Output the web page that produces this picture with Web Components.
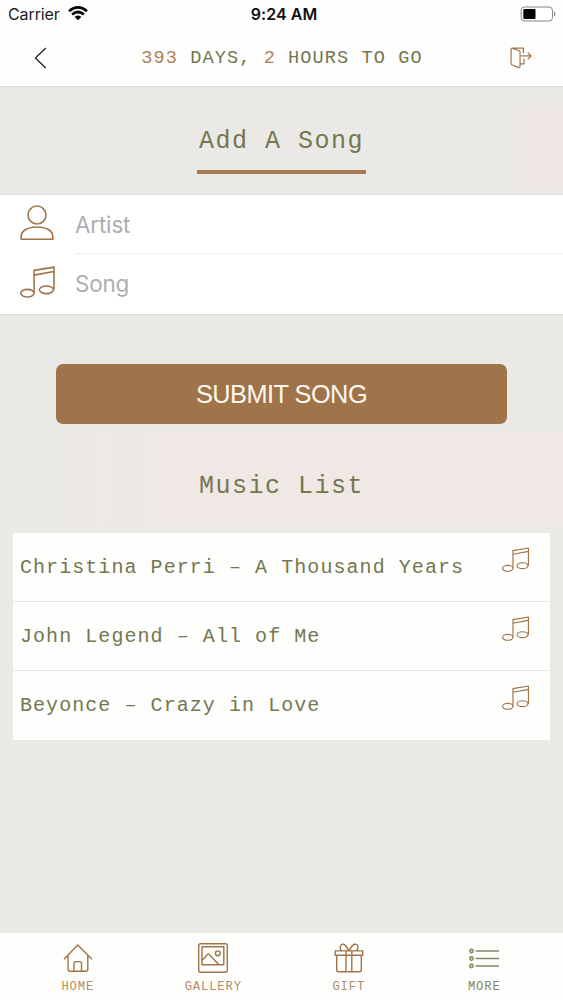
<!DOCTYPE html>
<html lang="en">
<head>
<meta charset="utf-8">
<title>Add A Song</title>
<style>
html,body{margin:0;height:100%}
body{--brown:#a0744a;--olive:#747750;--mono:"Liberation Mono",monospace;--sans:Inter,"Liberation Sans",sans-serif;overflow:hidden}
</style>
</head>
<body>
<song-app></song-app>
<script>
const define = (name, markup) => {
  const template = document.createElement('template');
  template.innerHTML = '<style>*{box-sizing:border-box}</style>' + markup;
  customElements.define(name, class extends HTMLElement {
    constructor() {
      super();
      this.attachShadow({ mode: 'open' }).append(template.content.cloneNode(true));
    }
  });
};

const icons = {
  music: ['0 0 36 33', '<ellipse cx="7.4" cy="27.2" rx="6.6" ry="3.8"/><ellipse cx="26.4" cy="23.8" rx="7" ry="3.8"/><path d="M14.1 27.2V4.4L34 1.1V23.8M14.1 9.1 34 5.5"/>'],
  user: ['0 0 34 36', '<circle cx="17" cy="10" r="9"/><path d="M1.2 34.2V31.5C1.2 25.5 8 22 17 22S32.8 25.5 32.8 31.5V34.2Z"/>'],
  back: ['0 0 14 24', '<path d="M12.7 1.2 1.5 12 12.7 22.8"/>'],
  exit: ['0 0 24 24', '<path d="M2.2 2.2Q1.1 2.2 1.1 3.3V18.2Q1.1 19 2 19.5L8.5 22.3Q10.5 23 10.5 21V6.6Q10.5 5.5 9.5 5L2.2 2.2H14V7.6M10.5 18.6H14.6V13.2M11.7 10.4H22M18.5 6.9 22 10.4 18.5 13.9"/>'],
  home: ['0 0 30 30', '<path d="M1 16.2 14.7 2 29 16.2M5.1 12.5V26Q5.1 28.2 7.2 28.2H22.5Q24.8 28.2 24.8 26V12.5M11 28V20Q11 18.6 12.5 18.6H17Q18.5 18.6 18.5 20V28"/>'],
  gallery: ['0 0 30 30', '<rect x=".7" y=".7" width="28.6" height="28.6" rx="1.7"/><path d="M4 3.8H25.8V21.7H4ZM4 17.5 9.7 11.3Q10.4 10.6 11.1 11.3L20.6 21.4"/><circle cx="19.8" cy="10.3" r="2.4"/>'],
  gift: ['0 0 30 30', '<path d="M1.2 7.9H28.8V12.2H1.2ZM2.7 12.2V27Q2.7 28.8 4.5 28.8H25.5Q27.3 28.8 27.3 27V12.2M12 8V28.5M17.8 8V28.5M14.6 7.8C11.6-.2 6.5-.4 6.3 4.2 6.2 6.2 7.2 7.8 8 7.8M15.4 7.8C18.4-.2 23.7-.4 23.9 4.2 24 6.2 22.7 7.8 21.8 7.8"/>'],
  more: ['0 0 30 30', '<g fill="currentColor" fill-opacity=".35"><circle cx="2.5" cy="8" r="1.7"/><circle cx="2.5" cy="15.5" r="1.7"/><circle cx="2.5" cy="23" r="1.7"/></g><path d="M6.6 8H30M6.6 15.5H30M6.6 23H30"/>']
};
customElements.define('line-icon', class extends HTMLElement {
  connectedCallback() {
    const [box, art] = icons[this.getAttribute('name')];
    this.attachShadow({ mode: 'open' }).innerHTML =
      `<style>:host{display:block;flex:none;color:var(--brown)}svg{display:block;width:100%;height:100%;overflow:visible;fill:none;stroke:currentColor;stroke-width:var(--line,1.6);stroke-linejoin:round}</style><svg viewBox="${box}">${art}</svg>`;
  }
});

define('status-bar', `<style>
:host{display:grid;grid-template-columns:1fr auto 1fr;align-items:center;height:29px;padding:0 7px 2px 8px;font:16px/20px var(--sans);color:#202020}
.left{display:flex;align-items:center;gap:8px;letter-spacing:-.1px}
.time{font-weight:600;font-size:16px;letter-spacing:.05px;color:#111;transform:translateX(2px)}
.battery{justify-self:end}
svg{display:block}
</style>
<div class="left"><span>Carrier</span>
<svg width="20" height="15" viewBox="0 0 20 15" fill="none" stroke="#050505" stroke-width="2.7"><path d="M1 5.2Q10-2.4 19 5.2M4.1 8.5Q10 3.5 15.9 8.5"/><path d="M6.7 10.9Q10 8.2 13.3 10.9L10 14.2Z" fill="#050505" stroke="none"/></svg></div>
<span class="time">9:24 AM</span>
<svg class="battery" width="36" height="16" viewBox="0 0 36 16"><rect x="1.2" y="1" width="31.3" height="14" rx="3.5" fill="#fff" stroke="#858585"/><rect x="3.3" y="3.1" width="12.2" height="9.8" rx="1" fill="#000"/><path d="M34 5.3Q37 8 34 10.7Z" fill="#858585"/></svg>`);

define('nav-bar', `<style>
:host{display:grid;grid-template-columns:1fr auto 1fr;align-items:center;height:58px;padding:0 30px 0 34px;border-bottom:1px solid #e0dfe0;font:18.6px/24px var(--mono);letter-spacing:1.07px;color:var(--olive)}
.back{width:13px;height:24px;color:#222;--line:1.35}
.exit{width:23px;height:23px;justify-self:end;--line:1.25}
div{white-space:pre;padding-top:2px;margin-left:-3px}
::slotted(b){font-weight:400;color:#b27f50}
</style><line-icon class="back" name="back"></line-icon><div><slot></slot></div><line-icon class="exit" name="exit"></line-icon>`);

define('page-title', `<style>
:host{display:flex;justify-content:center;height:107px;padding-top:37px}
span{height:50px;width:169px;text-align:center;white-space:nowrap;border-bottom:4px solid #a57a50;font:25px/36px var(--mono);letter-spacing:1.5px;color:var(--olive)}
</style><span><slot></slot></span>`);

define('song-form', `<style>:host{display:block;background:#fff;border:solid #e0dfdd;border-width:1px 0}</style><slot></slot>`);
define('form-field', `<style>
:host{display:flex;align-items:stretch;height:59px;padding-left:20px;color:#aeadb1;font:22.4px/59px var(--sans);letter-spacing:-.15px}
.icon{display:flex;width:55px;align-items:flex-start;padding-top:var(--icon-top,10px)}
.label{flex:1;border-bottom:var(--rule,1px solid #ededee)}
</style><div class="icon"><slot name="icon"></slot></div><div class="label"><slot></slot></div>`);

define('submit-button', `<style>
:host{display:block;margin:50px 56px 0}
button{display:block;width:451px;height:60px;border:0;border-radius:7px;padding:0;background:var(--brown);color:#fff8ef;font:25.3px/60px "Liberation Sans",sans-serif;letter-spacing:-.5px}
</style><button><slot></slot></button>`);

define('list-heading', `<style>
:host{display:block;height:109px;padding-top:45px;text-align:center;font:25px/36px var(--mono);letter-spacing:1.5px;color:var(--olive)}
</style><slot></slot>`);
define('song-list', `<style>:host{display:block;margin:0 13px;background:#fefefd}</style><slot></slot>`);
define('song-item', `<style>
:host{display:flex;justify-content:space-between;height:69px;padding:0 20px 0 7px;border-bottom:1px solid #e8e7e6;font:20px/69px var(--mono);letter-spacing:1.06px;color:var(--olive);white-space:nowrap}
:host(:last-child){border-bottom:0}
line-icon{width:28px;height:26px;margin-top:14px;--line:1.5}
</style><span><slot></slot></span><line-icon name="music"></line-icon>`);

define('tab-bar', `<style>:host{display:flex;height:67px;padding:0 11px 0 10px;background:#fefefd}</style><slot></slot>`);
define('tab-item', `<style>
:host{flex:1;display:flex;flex-direction:column;align-items:center;padding-top:10px;color:var(--tab,#b38b66);font:12.2px/16px var(--mono);letter-spacing:.84px}
span{margin-top:6px}
</style><slot name="icon"></slot><span><slot></slot></span>`);

define('song-app', `<style>
*{box-sizing:border-box}
:host{display:flex;flex-direction:column;width:563px;height:1000px;background:#fefefe}
main{flex:1;background:linear-gradient(90deg,transparent 10%,#efe8e4 28%) 0 345px/100% 95px no-repeat,linear-gradient(90deg,transparent 91%,#efe7e4 93%) 0 20px/100% 80px no-repeat,#ebe9e5}
.user{width:34px;height:36px}.music{width:36px;height:33px}
.last{--rule:0;--icon-top:12px;height:60px}
.last + *{display:none}
submit-button{margin-top:49px}
.tab{width:30px;height:30px;--line:1.4}
.more{--tab:#858169}.more line-icon{color:#858763}
</style>
<status-bar></status-bar>
<nav-bar><b>393</b> DAYS, <b>2</b> HOURS TO GO</nav-bar>
<main>
<page-title>Add A Song</page-title>
<song-form>
<form-field><line-icon slot="icon" class="user" name="user"></line-icon>Artist</form-field>
<form-field class="last"><line-icon slot="icon" class="music" name="music"></line-icon>Song</form-field>
</song-form>
<submit-button>SUBMIT SONG</submit-button>
<list-heading>Music List</list-heading>
<song-list><song-item>Christina Perri – A Thousand Years</song-item><song-item>John Legend – All of Me</song-item><song-item>Beyonce – Crazy in Love</song-item></song-list>
</main>
<tab-bar>
<tab-item><line-icon slot="icon" class="tab" name="home"></line-icon>HOME</tab-item>
<tab-item><line-icon slot="icon" class="tab" name="gallery"></line-icon>GALLERY</tab-item>
<tab-item><line-icon slot="icon" class="tab" name="gift"></line-icon>GIFT</tab-item>
<tab-item class="more"><line-icon slot="icon" class="tab" name="more"></line-icon>MORE</tab-item>
</tab-bar>`);
</script>
</body>
</html>
